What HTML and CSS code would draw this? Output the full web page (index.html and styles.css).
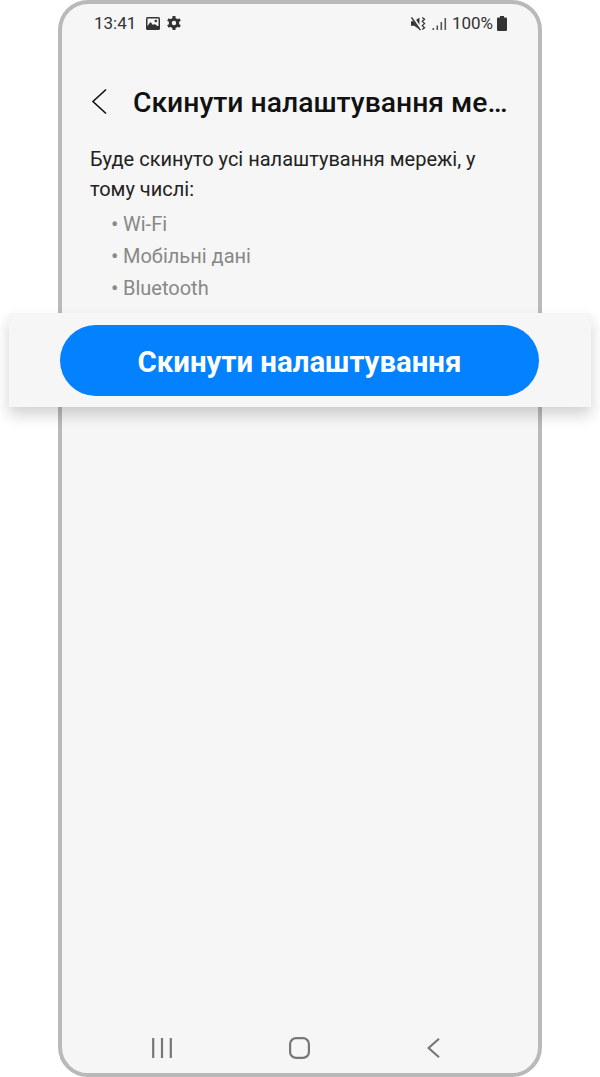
FILE: index.html
```html
<!DOCTYPE html>
<html lang="uk">
<head>
    <meta charset="UTF-8">
    <meta name="viewport" content="width=device-width, initial-scale=1.0">
    <title>Скинути налаштування мережі</title>
    <link rel="stylesheet" href="styles.css">
</head>
<body>
    <div class="phone">
        <div class="status-bar">
            <div class="status-left">
                <span class="clock">13:41</span>
                <svg class="status-icon" width="14" height="13" viewBox="0 0 14 13">
                    <rect x="0" y="0" width="14" height="13" rx="1.500" fill="#333"/>
                    <rect x="1.500" y="1.500" width="11" height="7.500" fill="#f6f6f6"/>
                    <circle cx="9.800" cy="4" r="1.300" fill="#333"/>
                    <path d="M1.500 9l3-4 2.500 3 1.500-1 3 2v1.500h-10z" fill="#333"/>
                </svg>
                <svg class="status-icon" width="14" height="14" viewBox="0 0 14 14">
                    <circle cx="7" cy="7" r="3.700" fill="none" stroke="#333" stroke-width="3"/>
                    <path d="M7 0v3M7 11v3M.9 3.500l2.600 1.500M10.500 9l2.600 1.500M.9 10.500l2.600-1.500M10.500 5l2.600-1.500" stroke="#333" stroke-width="3"/>
                </svg>
            </div>
            <div class="status-right">
                <svg class="status-icon" width="15" height="15" viewBox="0 0 16 15">
                    <path d="M0 5h3.500l5.500-4v13l-5.500-4H0z" fill="#333"/>
                    <path d="M1 0l10 14" stroke="#f6f6f6" stroke-width="3"/>
                    <path d="M.5 1l9.500 13.500" stroke="#333" stroke-width="1.500"/>
                    <path d="M12 1l2.500 2-2.500 2.200 2.500 2.300-2.500 2.300 2.500 2.200-2.500 2" fill="none" stroke="#333" stroke-width="1.300"/>
                </svg>
                <svg class="status-icon signal" width="15" height="15" viewBox="0 0 15 15">
                    <rect x="0.500" y="12" width="1.600" height="2" fill="#555"/>
                    <rect x="4.500" y="9.500" width="1.600" height="4.500" fill="#555"/>
                    <rect x="8.500" y="6" width="1.600" height="8" fill="#555"/>
                    <rect x="12.500" y="2" width="1.600" height="12" fill="#555"/>
                </svg>
                <span class="battery-text">100%</span>
                <svg class="status-icon" width="10" height="15" viewBox="0 0 10 15">
                    <path d="M3 0h4v1.500h1.800a1.200 1.200 0 0 1 1.200 1.200v11a1.200 1.200 0 0 1-1.200 1.200H1.200A1.200 1.200 0 0 1 0 13.700v-11a1.200 1.200 0 0 1 1.200-1.200H3z" fill="#333"/>
                </svg>
            </div>
        </div>

        <div class="title-bar">
            <svg class="back-arrow" width="18" height="28" viewBox="0 0 18 28">
                <path d="M16 1.500L3 13.500l13 12" fill="none" stroke="#111" stroke-width="1.600"/>
            </svg>
            <h1 class="title">Скинути налаштування ме…</h1>
        </div>

        <div class="content">
            <p class="intro">Буде скинуто усі налаштування мережі, у тому числі:</p>
            <ul class="reset-list">
                <li>Wi-Fi</li>
                <li>Мобільні дані</li>
                <li>Bluetooth</li>
            </ul>
        </div>

        <div class="nav-bar">
            <svg width="20" height="20" viewBox="0 0 20 20">
                <path d="M1.200 0v20M10 0v20M18.800 0v20" stroke="#777" stroke-width="2.200"/>
            </svg>
            <svg width="21" height="22" viewBox="0 0 21 22">
                <rect x="1.100" y="1.100" width="18.800" height="19.800" rx="6" fill="none" stroke="#777" stroke-width="2.200"/>
            </svg>
            <svg width="13" height="20" viewBox="0 0 13 20">
                <path d="M12 .8L1.600 10 12 19.200" fill="none" stroke="#777" stroke-width="2.200"/>
            </svg>
        </div>
    </div>

    <div class="highlight">
        <button class="reset-btn">Скинути налаштування</button>
    </div>
</body>
</html>
```

FILE: styles.css
```css
* {
    box-sizing: border-box;
}
html, body {
    margin: 0;
    padding: 0;
    background-color: #fff;
}
body {
    width: 600px;
    height: 1077px;
    overflow: hidden;
    position: relative;
    font-family: Roboto, "Noto Sans", sans-serif;
}
.phone {
    width: 484px;
    height: 1077px;
    margin-left: 58px;
    border: 4px solid #b9b9b9;
    border-radius: 30px;
    background-color: #f6f6f6;
    display: flex;
    flex-direction: column;
}
.status-bar {
    display: flex;
    justify-content: space-between;
    align-items: center;
    padding: 3px 31px 0 32px;
    height: 35px;
    font-size: 17px;
    color: #333;
}
.status-left, .status-right {
    display: flex;
    align-items: center;
}
.status-left {
    gap: 7px;
}
.clock {
    margin-right: 3px;
}
.status-right {
    gap: 3px;
}
.battery-text {
    margin-right: 1px;
}
.signal {
    margin: 0 2px 0 3px;
}
.status-icon {
    display: block;
}
.title-bar {
    display: flex;
    align-items: center;
    margin-top: 43px;
    height: 40px;
    padding-left: 28px;
}
.back-arrow {
    display: block;
    flex: none;
}
.title {
    margin: 0 0 0 25px;
    font-size: 28.300px;
    font-weight: 500;
    color: #111;
    white-space: nowrap;
}
.content {
    flex: 1;
    padding: 22px 28px 0 28px;
}
.intro {
    margin: 0;
    font-size: 20px;
    line-height: 30px;
    color: #222;
}
.reset-list {
    list-style: none;
    margin: 4px 0 0 0;
    padding: 0 0 0 21px;
    font-size: 20px;
    line-height: 32px;
    color: #888;
}
.reset-list li::before {
    content: "•";
    display: inline-block;
    width: 12px;
    font-size: 22px;
    line-height: 20px;
    vertical-align: -1px;
}
.nav-bar {
    display: flex;
    justify-content: space-between;
    align-items: center;
    height: 44px;
    margin-bottom: 3px;
    padding: 0 98px 0 90px;
}
.nav-bar svg {
    display: block;
}
.highlight {
    position: absolute;
    left: 9px;
    top: 313px;
    width: 582px;
    height: 94px;
    background-color: #f6f6f6;
    box-shadow: 0 8px 14px rgba(0,0,0,0.18);
    padding: 12px 0 0 51px;
}
.reset-btn {
    display: block;
    width: 479px;
    height: 71px;
    padding: 2px 0 0 0;
    border: none;
    border-radius: 36px;
    background-color: #0381fe;
    color: #fff;
    font-family: inherit;
    font-size: 29.400px;
    font-weight: 700;
}
```
